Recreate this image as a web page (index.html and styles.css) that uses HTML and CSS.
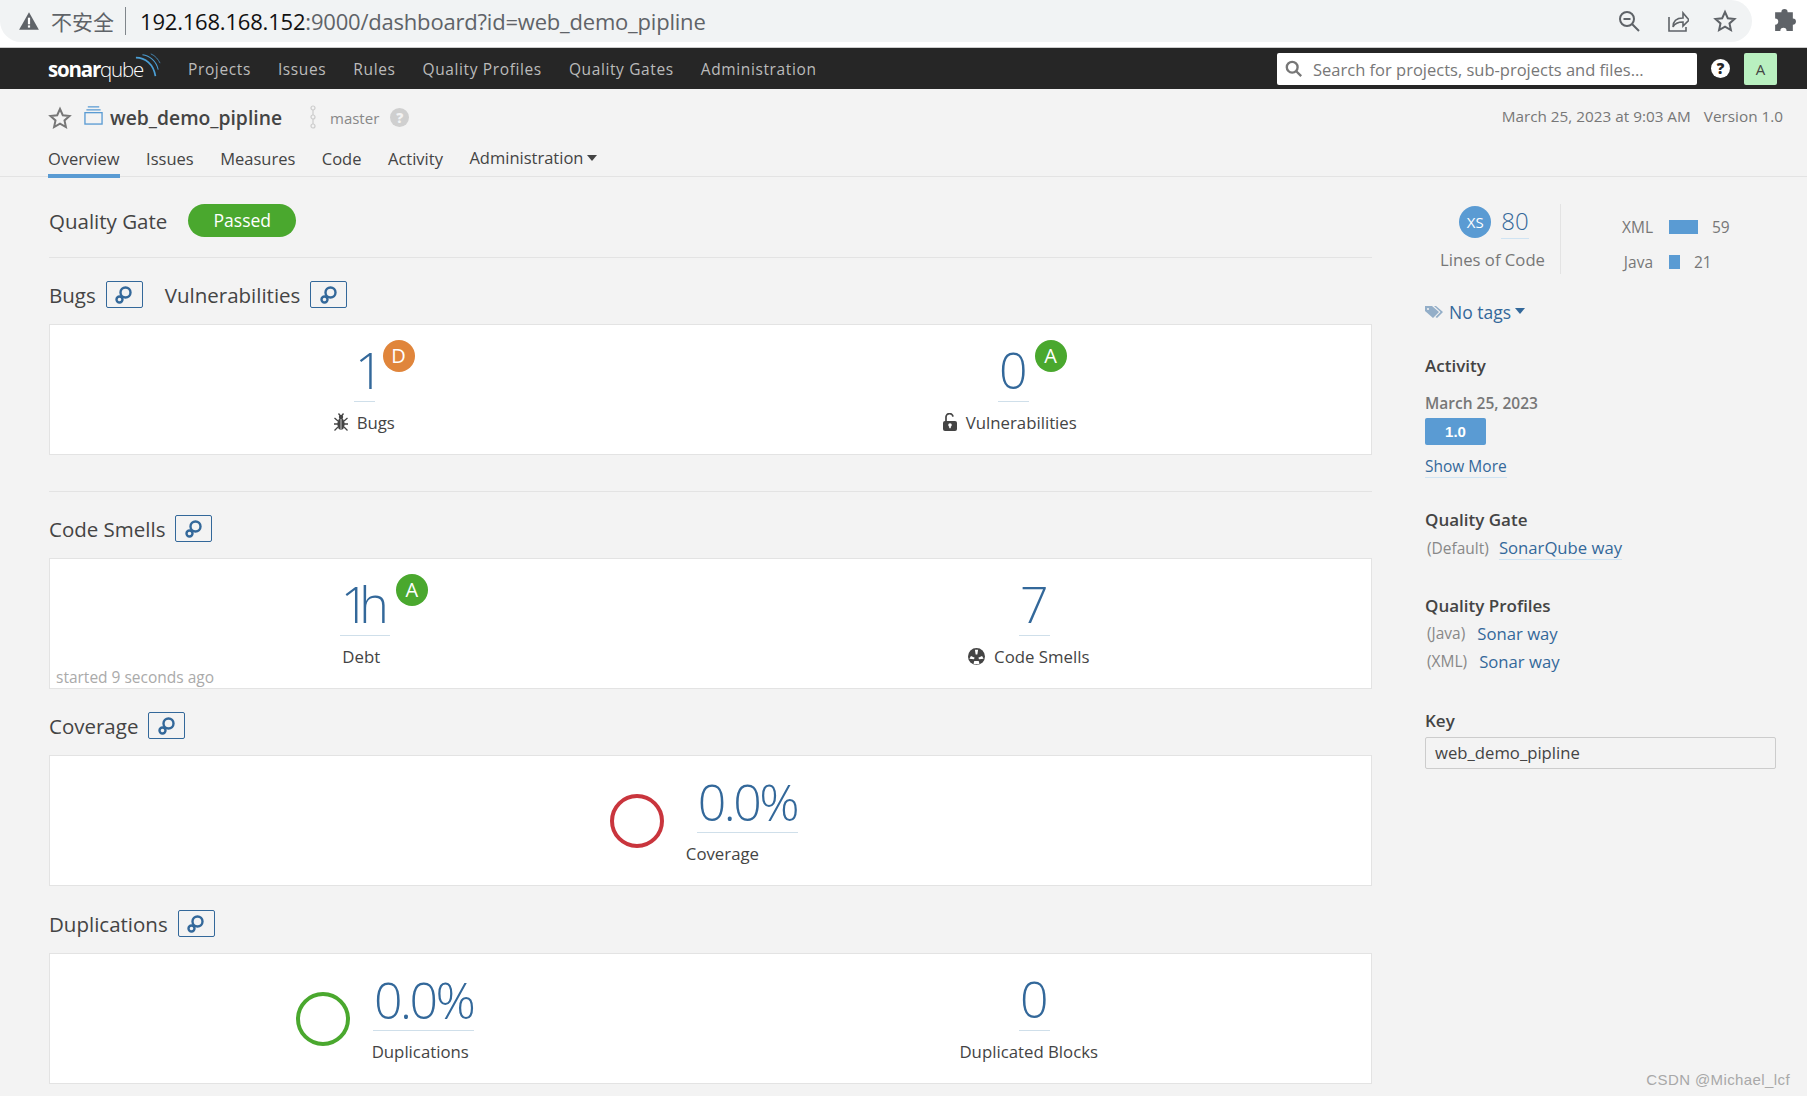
FILE: index.html
```html
<!DOCTYPE html>
<html lang="en">
<head>
  <meta charset="UTF-8">
  <title>web_demo_pipline</title>
  <link rel="stylesheet" href="styles.css">
</head>
<body>

  <div class="browser-bar">
    <div class="omnibox">
      <svg class="warn-icon" viewBox="0 0 20 20"><path d="M10 2 19 18H1z" fill="#5f6368"/><rect x="9" y="7" width="2" height="6" fill="#fff"/><rect x="9" y="14" width="2" height="2" fill="#fff"/></svg>
      <span class="unsafe">不安全</span>
      <span class="url"><b>192.168.168.152</b>:9000/dashboard?id=web_demo_pipline</span>
      <div class="omni-icons">
        <svg viewBox="0 0 24 24" fill="none" stroke="#5f6368" stroke-width="2"><circle cx="10" cy="10" r="7"/><path d="M15 15l7 7M6.500 10h7"/></svg>
        <svg viewBox="0 0 24 24" fill="none" stroke="#5f6368" stroke-width="1.600"><path d="M4 8v14h17v-4"/><path d="M8 18c0-6 4-9 10-9V4l6 7-6 6v-4c-4 0-8 1-10 5z"/></svg>
        <svg viewBox="0 0 24 24" fill="none" stroke="#5f6368" stroke-width="2"><path d="M12 3l2.800 6.200 6.700.7-5 4.500 1.400 6.600-5.900-3.400-5.900 3.400 1.400-6.600-5-4.500 6.700-.7z"/></svg>
      </div>
    </div>
    <svg class="puzzle-icon" viewBox="0 0 24 24"><path fill="#5f6368" d="M9 5a3 3 0 0 1 6 0h5v6a3 3 0 0 1 0 6v6h-6a3 3 0 0 0-6 0H3v-6a3 3 0 0 0 0-6V5z" transform="translate(0 -1)"/></svg>
  </div>

  <nav class="topnav">
    <a class="logo"><b>sonar</b>qube
      <svg class="logo-waves" viewBox="0 0 28 28" fill="none" stroke="#4b9fd5"><path d="M1 6c10 0 19 7 21 20" stroke-width="1.800"/><path d="M8 3c8 1 15 7 17 16" stroke-width="1.100"/><path d="M17 2c5 2 8 6 10 10" stroke-width=".8"/></svg>
    </a>
    <ul class="nav-list">
      <li>Projects</li>
      <li>Issues</li>
      <li>Rules</li>
      <li>Quality Profiles</li>
      <li>Quality Gates</li>
      <li>Administration</li>
    </ul>
    <div class="search-box">
      <svg viewBox="0 0 20 20" fill="none" stroke="#777" stroke-width="2.600"><circle cx="8" cy="8" r="6"/><path d="M12.500 12.500 18 18"/></svg>
      <span>Search for projects, sub-projects and files...</span>
    </div>
    <span class="help-dot">?</span>
    <span class="avatar">A</span>
  </nav>

  <header class="project-bar">
    <div class="project-top">
      <svg class="star-icon" viewBox="0 0 24 24" fill="none" stroke="#777" stroke-width="2"><path d="M12 3l2.800 6.200 6.700.7-5 4.500 1.400 6.600-5.900-3.400-5.900 3.400 1.400-6.600-5-4.500 6.700-.7z"/></svg>
      <svg class="qualifier-icon" viewBox="0 0 20 20" fill="none" stroke="#5a9bd3" stroke-width="1.400"><path d="M4 1h12M2.500 4h15"/><rect x="1" y="7" width="18" height="12"/></svg>
      <span class="project-name">web_demo_pipline</span>
      <svg class="branch-icon" viewBox="0 0 8 24" fill="none" stroke="#ccc" stroke-width="1.200"><circle cx="4" cy="3" r="2"/><circle cx="4" cy="12" r="2"/><circle cx="4" cy="21" r="2"/><path d="M4 5v5M4 14v5"/></svg>
      <span class="branch-name">master</span>
      <span class="help-grey">?</span>
      <span class="project-meta">March 25, 2023 at 9:03 AM</span>
      <span class="project-meta version">Version 1.0</span>
    </div>
    <ul class="tabs">
      <li class="active">Overview</li>
      <li>Issues</li>
      <li>Measures</li>
      <li>Code</li>
      <li>Activity</li>
      <li class="tab-admin">Administration<i class="caret"></i></li>
    </ul>
  </header>

  <main class="page">
    <div class="overview">
      <div class="gate">
        <h2>Quality Gate</h2>
        <span class="gate-pill">Passed</span>
      </div>

      <div class="section first">
        <div class="section-head">
          <h2>Bugs</h2>
          <a class="link-btn"><svg viewBox="0 0 20 20"><use href="#chain"/></svg></a>
          <h2 class="second-title">Vulnerabilities</h2>
          <a class="link-btn"><svg viewBox="0 0 20 20"><use href="#chain"/></svg></a>
        </div>
        <div class="card">
          <div class="col bugs-col">
            <div class="measure">
              <span class="value"><span class="narrow-one">1</span><span class="rating rating-d">D</span></span>
              <span class="label"><svg class="label-icon" viewBox="0 0 14 18"><ellipse cx="7" cy="11" rx="3.600" ry="6" fill="#444"/><circle cx="7" cy="4" r="2.200" fill="#444"/><path d="M7 6v11" stroke="#fff" stroke-width=".7"/><path d="M.5 5l3.500 3M13.500 5 10 8M0 11h4M14 11h-4M.5 17.500 4 14M13.500 17.500 10 14M4.500.5l1.500 2M9.500.5 8 2.500" stroke="#444" stroke-width="1.300" fill="none"/></svg>Bugs</span>
            </div>
          </div>
          <div class="col vuln-col">
            <div class="measure">
              <span class="value">0<span class="rating rating-a">A</span></span>
              <span class="label"><svg class="label-icon" viewBox="0 0 14 18"><rect x="0" y="8" width="14" height="10" rx="2" fill="#444"/><path d="M3 8.500V4.500a3.500 3.500 0 0 1 7-.8" fill="none" stroke="#444" stroke-width="1.700"/><circle cx="7" cy="12" r="1.800" fill="#fff"/><rect x="6.200" y="12" width="1.600" height="3.200" fill="#fff"/></svg>Vulnerabilities</span>
            </div>
          </div>
        </div>
      </div>

      <div class="section smells">
        <div class="section-head">
          <h2>Code Smells</h2>
          <a class="link-btn"><svg viewBox="0 0 20 20"><use href="#chain"/></svg></a>
        </div>
        <div class="card">
          <span class="started">started 9 seconds ago</span>
          <div class="col debt-col">
            <div class="measure">
              <span class="value"><span class="narrow-one">1</span>h<span class="rating rating-a rating-debt">A</span></span>
              <span class="label">Debt</span>
            </div>
          </div>
          <div class="col smell-col">
            <div class="measure">
              <span class="value value-shift">7</span>
              <span class="label"><svg class="label-icon icon-round" viewBox="0 0 16 16"><circle cx="8" cy="8" r="8" fill="#444"/><path d="M6.500 1.600h3L8.800 6H7.200zM1.300 10.200 2.800 7.600l3.500 1.500-.8 1.400zM14.700 10.200l-1.500-2.600-3.500 1.500.8 1.400zM5.900 12.200h4.200l.7 2.600a7 7 0 0 1-5.600 0z" fill="#fff"/></svg>Code Smells</span>
            </div>
          </div>
        </div>
      </div>

      <div class="section coverage">
        <div class="section-head">
          <h2>Coverage</h2>
          <a class="link-btn"><svg viewBox="0 0 20 20"><use href="#chain"/></svg></a>
        </div>
        <div class="card card-center">
          <span class="donut donut-red"></span>
          <div class="measure">
            <span class="value value-pct">0.0%</span>
            <span class="label label-coverage">Coverage</span>
          </div>
        </div>
      </div>

      <div class="section duplications">
        <div class="section-head">
          <h2>Duplications</h2>
          <a class="link-btn"><svg viewBox="0 0 20 20"><use href="#chain"/></svg></a>
        </div>
        <div class="card">
          <div class="col dup-col">
            <span class="donut donut-green"></span>
            <div class="measure">
              <span class="value value-pct">0.0%</span>
              <span class="label">Duplications</span>
            </div>
          </div>
          <div class="col blocks-col">
            <div class="measure">
              <span class="value value-shift">0</span>
              <span class="label">Duplicated Blocks</span>
            </div>
          </div>
        </div>
      </div>
    </div>

    <aside class="sidebar">
      <div class="size-row">
        <div class="loc">
          <div class="loc-top">
            <span class="size-badge">XS</span>
            <span class="loc-value">80</span>
          </div>
          <span class="loc-label">Lines of Code</span>
        </div>
        <div class="langs">
          <div class="lang-row"><span class="lang-name">XML</span><i class="lang-bar bar-xml"></i><span>59</span></div>
          <div class="lang-row"><span class="lang-name">Java</span><i class="lang-bar bar-java"></i><span>21</span></div>
        </div>
      </div>

      <div class="tags">
        <svg viewBox="0 0 18 14" fill="#93aec8"><path d="M0 1h7l7 6-6 6-8-7zM9 1h2l7 6-6 6-1.500-1 5-5z"/><circle cx="3" cy="4" r="1" fill="#f3f3f3"/></svg>
        <span>No tags</span><i class="caret caret-blue"></i>
      </div>

      <h3 class="side-title activity-title">Activity</h3>
      <div class="activity-date">March 25, 2023</div>
      <div class="version-badge">1.0</div>
      <a class="show-more">Show More</a>

      <h3 class="side-title gate-title">Quality Gate</h3>
      <div class="side-line gate-line"><span class="muted">(Default)</span><a class="underlined">SonarQube way</a></div>

      <h3 class="side-title profiles-title">Quality Profiles</h3>
      <div class="side-line profile-line java-line"><span class="muted">(Java)</span><a>Sonar way</a></div>
      <div class="side-line profile-line"><span class="muted">(XML)</span><a>Sonar way</a></div>

      <h3 class="side-title key-title">Key</h3>
      <div class="key-input">web_demo_pipline</div>
    </aside>
  </main>

  <div class="watermark">CSDN @Michael_lcf</div>

  <svg width="0" height="0" class="sprite">
    <symbol id="chain" viewBox="0 0 20 20">
      <circle cx="11.500" cy="7.500" r="5" fill="none" stroke="#33689a" stroke-width="2.400"/>
      <circle cx="5.500" cy="14.500" r="3" fill="none" stroke="#33689a" stroke-width="2.400"/>
    </symbol>
  </svg>

</body>
</html>
```

FILE: styles.css
```css
body {
  margin: 0;
  height: 1096px;
  overflow: hidden;
  position: relative;
  background: #f3f3f3;
  color: #444;
  font-family: "Open Sans", sans-serif;
  font-size: 17px;
}

h2, h3, ul {
  margin: 0;
  padding: 0;
  font-weight: 400;
}

li {
  list-style: none;
}

.sprite {
  position: absolute;
}

/* Browser bar */
.browser-bar {
  height: 47px;
  background: #fff;
  display: flex;
  border-bottom: 1px solid #ccc;
}

.omnibox {
  width: 1752px;
  height: 42px;
  background: #f1f3f4;
  border-radius: 0 21px 21px 21px;
  display: flex;
  align-items: center;
  padding-left: 18px;
  box-sizing: border-box;
}

.warn-icon {
  width: 22px;
  height: 22px;
}

.unsafe {
  font-family: "Noto Sans CJK SC", sans-serif;
  font-size: 21px;
  color: #5f6368;
  margin-left: 11px;
  padding-right: 11px;
  border-right: 1px solid #80868b;
  line-height: 28px;
}

.url {
  font-family: "Open Sans", sans-serif;
  font-size: 22px;
  color: #5f6368;
  margin-left: 14px;
  letter-spacing: -.2px;
}

.url b {
  font-weight: 400;
  color: #111;
}

.omni-icons {
  margin-left: auto;
  display: flex;
  gap: 24px;
  padding-right: 15px;
}

.omni-icons svg {
  width: 24px;
  height: 24px;
}

.puzzle-icon {
  width: 25px;
  height: 25px;
  margin: 8px 0 0 20px;
}

/* Top navigation */
.topnav {
  height: 41px;
  background: #262626;
  display: flex;
  align-items: center;
  padding-left: 48px;
}

.logo {
  position: relative;
  color: #fff;
  font-family: "Open Sans", sans-serif;
  font-size: 20.500px;
  font-weight: 300;
  letter-spacing: -1.200px;
  width: 140px;
}

.logo b {
  font-weight: 700;
}

.logo-waves {
  position: absolute;
  left: 87px;
  top: -3px;
  width: 26px;
  height: 26px;
}

.nav-list {
  display: flex;
  gap: 27px;
  font-size: 15.500px;
  letter-spacing: .62px;
  color: #bbb;
}

.search-box {
  margin-left: auto;
  width: 420px;
  height: 32px;
  background: #fff;
  border-radius: 2px;
  display: flex;
  align-items: center;
  padding: 1px 0 0 8px;
  box-sizing: border-box;
  color: #777;
  font-size: 16.500px;
}

.search-box svg {
  width: 18px;
  height: 18px;
  margin-right: 10px;
}

.help-dot {
  width: 19px;
  height: 19px;
  border-radius: 50%;
  background: #fff;
  color: #262626;
  font-size: 15px;
  font-weight: 800;
  line-height: 19px;
  text-align: center;
  margin-left: 14px;
}

.avatar {
  width: 33px;
  height: 32px;
  background: #b9f0c0;
  border-radius: 2px;
  margin: 0 30px 0 14px;
  text-align: center;
  line-height: 32px;
  font-size: 15px;
}

/* Project bar */
.project-bar {
  height: 87px;
  border-bottom: 1px solid #e3e3e3;
  padding: 0 24px 0 48px;
}

.project-top {
  display: flex;
  align-items: center;
  height: 28px;
  padding-top: 14px;
}

.star-icon {
  width: 24px;
  height: 24px;
  margin-top: 2px;
}

.qualifier-icon {
  width: 19px;
  height: 19px;
  margin: -4px 0 0 12px;
}

.project-name {
  font-size: 19.300px;
  font-weight: 600;
  margin-left: 7px;
  color: #444;
}

.branch-icon {
  width: 8px;
  height: 24px;
  margin-left: 27px;
}

.branch-name {
  font-size: 15px;
  color: #888;
  margin: 2px 0 0 13px;
}

.help-grey {
  width: 19px;
  height: 19px;
  border-radius: 50%;
  background: #cfcfcf;
  color: #f3f3f3;
  font-size: 14px;
  font-weight: 800;
  line-height: 19px;
  text-align: center;
  margin-left: 11px;
}

.project-meta {
  font-size: 15.300px;
  color: #777;
  margin-top: -2px;
}

.project-meta:not(.version) {
  margin-left: auto;
}

.version {
  margin-left: 13px;
}

.tabs {
  display: flex;
  gap: 26.500px;
  margin-top: 10px;
  font-size: 16.500px;
  color: #444;
}

.tabs li {
  height: 37px;
  line-height: 36px;
  box-sizing: border-box;
}

.tabs .active {
  border-bottom: 4px solid #5a9bd3;
}

.tabs .tab-admin {
  line-height: 34px;
}

.caret {
  display: inline-block;
  border: 5.500px solid transparent;
  border-top: 6px solid #444;
  border-bottom: 0;
  margin-left: 4px;
  vertical-align: 3px;
}

/* Main page */
.page {
  display: flex;
  padding-left: 49px;
}

.overview {
  width: 1323px;
}

.gate {
  display: flex;
  align-items: center;
  height: 33px;
  margin-top: 27px;
  padding-bottom: 20px;
  border-bottom: 1px solid #e3e3e3;
}

h2 {
  font-size: 20.500px;
  color: #444;
}

.gate-pill {
  width: 108px;
  height: 33px;
  margin-left: 21px;
  background: #4aa82e;
  border-radius: 17px;
  color: #fff;
  text-align: center;
  line-height: 32px;
  font-size: 17.500px;
}

.section-head {
  display: flex;
  align-items: center;
  height: 27px;
  margin-bottom: 16px;
}

.first .section-head {
  margin-top: 23px;
}

.link-btn {
  width: 37px;
  height: 27px;
  margin-left: 10px;
  border: 1px solid #33689a;
  border-radius: 2px;
  box-sizing: border-box;
  display: flex;
  align-items: center;
  justify-content: center;
}

.link-btn svg {
  width: 20px;
  height: 20px;
}

.second-title {
  margin-left: 22px;
}

.card {
  position: relative;
  height: 131px;
  background: #fff;
  border: 1px solid #e3e3e3;
  box-sizing: border-box;
  display: flex;
}

.col {
  width: 50%;
  box-sizing: border-box;
  display: flex;
  justify-content: center;
  align-items: flex-start;
}

.bugs-col { padding-right: 32px; }
.vuln-col { padding-right: 62px; }
.debt-col { padding-right: 38px; }
.smell-col { padding-right: 24px; }
.dup-col { padding-left: 10px; }
.blocks-col { padding-right: 24px; }

.measure {
  display: inline-flex;
  flex-direction: column;
  align-items: center;
}

.value {
  position: relative;
  font-size: 50px;
  font-weight: 300;
  line-height: 68px;
  height: 65px;
  margin: 11px 0 0 7px;
  color: #33689a;
  padding: 0 1px;
  border-bottom: 1px solid #cfdfea;
}

.value-shift {
  margin-left: 11px;
}

.value-pct {
  letter-spacing: -2.500px;
  line-height: 70px;
}

.narrow-one {
  letter-spacing: -10px;
}

.bugs-col .value {
  margin-left: 0;
}

.label {
  margin-top: 9px;
  font-size: 16.800px;
  line-height: 24px;
  color: #444;
  display: flex;
  align-items: center;
}

.label-coverage {
  align-self: flex-start;
  margin-left: -4px;
}

.label-icon {
  width: 14px;
  height: 18px;
  margin: -2px 9px 0 0;
}

.icon-round {
  width: 17px;
  height: 17px;
  margin-top: -1px;
}

.rating {
  position: absolute;
  top: 4px;
  left: calc(100% + 6px);
  width: 32px;
  height: 32px;
  border-radius: 50%;
  color: #fff;
  font-size: 20px;
  font-weight: 400;
  line-height: 32px;
  letter-spacing: 0;
  text-align: center;
}

.rating-d {
  left: calc(100% + 8px);
  background: #e0853b;
}

.rating-a { background: #4aa82e; }

.started {
  position: absolute;
  left: 6px;
  bottom: 0;
  font-size: 15.500px;
  color: #aaa;
}

.smells {
  margin-top: 36px;
  padding-top: 23px;
  border-top: 1px solid #e3e3e3;
}

.coverage {
  margin-top: 23px;
}

.duplications {
  margin-top: 24px;
}

.card-center {
  justify-content: center;
  padding-right: 13px;
}

.donut {
  width: 54px;
  height: 54px;
  border-radius: 50%;
  border: 4px solid;
  box-sizing: border-box;
  margin: 38px 26px 0 0;
}

.donut-red { border-color: #c9353d; }
.donut-green { border-color: #4aa82e; margin-right: 16px; }

/* Sidebar */
.sidebar {
  width: 351px;
  margin-left: 53px;
  font-size: 17px;
}

.size-row {
  display: flex;
  margin-top: 27px;
  height: 70px;
}

.loc {
  width: 135px;
  display: flex;
  flex-direction: column;
  align-items: center;
  border-right: 1px solid #e3e3e3;
}

.loc-top {
  display: flex;
  align-items: center;
}

.size-badge {
  width: 32px;
  height: 32px;
  border-radius: 50%;
  background: #5a9bd3;
  color: #fff;
  font-size: 15px;
  line-height: 32px;
  text-align: center;
  margin-left: 3px;
}

.loc-value {
  margin-left: 10px;
  font-size: 24px;
  font-weight: 300;
  color: #33689a;
  line-height: 34px;
  border-bottom: 1px solid #cfe3f2;
}

.loc-label {
  margin-top: 9px;
  font-size: 16.700px;
  color: #777;
}

.langs {
  padding-top: 5px;
}

.lang-row {
  display: flex;
  align-items: center;
  height: 35px;
  font-size: 15.500px;
  color: #777;
}

.lang-name {
  width: 92px;
  text-align: right;
  margin-right: 16px;
}

.lang-bar {
  height: 14px;
  background: #5a9bd3;
  margin-right: 14px;
}

.bar-xml { width: 29px; }
.bar-java { width: 11px; }

.tags {
  display: flex;
  align-items: center;
  margin-top: 26px;
  color: #33689a;
  font-size: 17.500px;
  height: 24px;
}

.tags svg {
  width: 18px;
  height: 14px;
  margin-right: 6px;
}

.caret-blue {
  border-top-color: #33689a;
  margin-top: -3px;
}

.side-title {
  font-size: 17px;
  font-weight: 600;
  color: #444;
}

.activity-title { margin-top: 30px; }

.activity-date {
  margin-top: 15px;
  font-size: 15.500px;
  font-weight: 600;
  color: #777;
}

.version-badge {
  width: 61px;
  height: 27px;
  margin-top: 4px;
  background: #5a9bd3;
  border-radius: 2px;
  color: #fff;
  font-family: "Liberation Sans", sans-serif;
  font-size: 15px;
  font-weight: 700;
  line-height: 27px;
  text-align: center;
}

.show-more {
  display: inline-block;
  margin-top: 10px;
  font-size: 15.500px;
  color: #33689a;
  border-bottom: 1px solid #cfe3f2;
}

.gate-title { margin-top: 30px; }
.gate-line { margin-top: 3px; }
.java-line { margin-top: 2px; }
.profiles-title { margin-top: 32px; }
.key-title { margin-top: 34px; }

.side-line {
  display: flex;
  align-items: center;
  height: 28px;
}

.side-line a {
  color: #33689a;
  font-size: 16.700px;
  margin-left: 10px;
}

.profile-line a {
  margin-left: 12px;
}

.underlined {
  border-bottom: 1px solid #cfe3f2;
}

.muted {
  color: #888;
  font-size: 15.500px;
  margin-left: 2px;
}

.key-input {
  margin-top: 5px;
  height: 32px;
  border: 1px solid #ccc;
  border-radius: 2px;
  box-sizing: border-box;
  padding-left: 9px;
  line-height: 30px;
  font-size: 16.700px;
}

.watermark {
  position: absolute;
  right: 17px;
  bottom: 8px;
  font-family: "Liberation Sans", sans-serif;
  font-size: 15px;
  letter-spacing: .4px;
  color: #a8a8a8;
}
```
